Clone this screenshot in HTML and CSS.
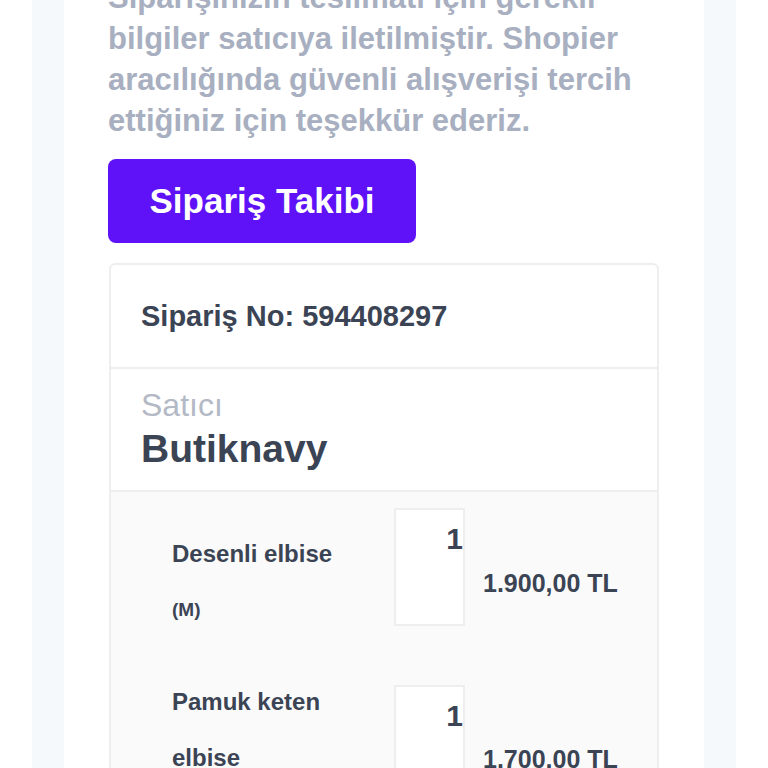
FILE: index.html
```html
<!DOCTYPE html>
<html>
<head>
  <title>Sipariş Onayı</title>
  <link rel="stylesheet" href="styles.css">
</head>
<body>
  <div class="page">
    <div class="content">
      <p class="intro">Siparişinizin teslimatı için gerekli bilgiler satıcıya iletilmiştir. Shopier aracılığında güvenli alışverişi tercih ettiğiniz için teşekkür ederiz.</p>

      <a class="track-btn" href="#">Sipariş Takibi</a>

      <div class="order">
        <div class="order-head">Sipariş No: 594408297</div>

        <div class="seller">
          <div class="seller-label">Satıcı</div>
          <div class="seller-name">Butiknavy</div>
        </div>

        <div class="items">
          <div class="item first">
            <div class="item-name">Desenli elbise<div class="item-size">(M)</div></div>
            <div class="item-qty">1</div>
            <div class="item-price">1.900,00 TL</div>
          </div>

          <div class="item second">
            <div class="item-name">Pamuk keten elbise<div class="item-size">(L)</div></div>
            <div class="item-qty">1</div>
            <div class="item-price">1.700,00 TL</div>
          </div>
        </div>
      </div>
    </div>
  </div>
</body>
</html>
```

FILE: styles.css
```css
* {
  box-sizing: border-box;
}

body {
  margin: 0;
  background-color: #ffffff;
  font-family: "Liberation Sans", Arial, sans-serif;
  color: #3b4454;
  overflow: hidden;
}

.page {
  margin: 0 32px;
  padding: 0 32px;
  background-color: #f6f9fb;
  min-height: 100vh;
}

.content {
  background-color: #ffffff;
  padding: 0 44px 40px;
  min-height: 100vh;
}

.intro {
  margin: -23px 0 0;
  font-size: 31px;
  font-weight: bold;
  line-height: 41px;
  color: #a8afc0;
}

.track-btn {
  display: inline-block;
  margin-top: 18px;
  width: 308px;
  height: 84px;
  line-height: 84px;
  text-align: center;
  background-color: #5f12f7;
  color: #ffffff;
  font-size: 35px;
  font-weight: bold;
  text-decoration: none;
  border-radius: 8px;
}

.order {
  margin: 20px 1px 0;
  border: 2px solid #eceef0;
  border-radius: 6px;
}

.order-head {
  padding: 33px 30px;
  font-size: 29px;
  font-weight: bold;
  line-height: 36px;
  border-bottom: 2px solid #eceef0;
}

.seller {
  padding: 18px 30px 19px;
  border-bottom: 2px solid #eceef0;
}

.seller-label {
  font-size: 32px;
  line-height: 36px;
  color: #b3b9c5;
}

.seller-name {
  margin-top: 4px;
  font-size: 39px;
  font-weight: bold;
  line-height: 44px;
}

.items {
  background-color: #fafafa;
  padding: 16px 0 40px 61px;
}

.item {
  display: flex;
  align-items: flex-start;
}

.item.second {
  margin-top: 36px;
}

.item-name {
  width: 200px;
  margin-right: 22px;
  font-size: 24px;
  font-weight: bold;
  line-height: 56px;
}

.item-size {
  font-size: 19px;
}

.item-qty {
  width: 71px;
  height: 118px;
  padding: 14px 0 0 0;
  text-align: right;
  background-color: #ffffff;
  border: 2px solid #eeeeee;
  font-size: 30px;
  font-weight: bold;
  line-height: 30px;
}

.item-price {
  margin-left: 18px;
  font-size: 25px;
  font-weight: bold;
  line-height: 30px;
}

.item.first .item-name {
  margin-top: 18px;
}

.item.first .item-price {
  margin-top: 60px;
}

.item.second .item-qty {
  margin-top: 11px;
}

.item.second .item-price {
  margin-top: 70px;
}
```
